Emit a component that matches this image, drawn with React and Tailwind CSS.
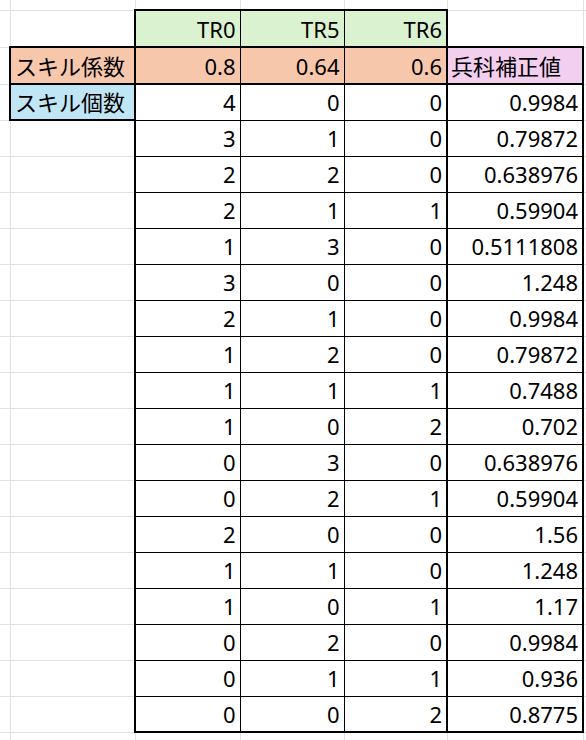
import React from 'react';

const rows = [
  [4, 0, 0, '0.9984'],
  [3, 1, 0, '0.79872'],
  [2, 2, 0, '0.638976'],
  [2, 1, 1, '0.59904'],
  [1, 3, 0, '0.5111808'],
  [3, 0, 0, '1.248'],
  [2, 1, 0, '0.9984'],
  [1, 2, 0, '0.79872'],
  [1, 1, 1, '0.7488'],
  [1, 0, 2, '0.702'],
  [0, 3, 0, '0.638976'],
  [0, 2, 1, '0.59904'],
  [2, 0, 0, '1.56'],
  [1, 1, 0, '1.248'],
  [1, 0, 1, '1.17'],
  [0, 2, 0, '0.9984'],
  [0, 1, 1, '0.936'],
  [0, 0, 2, '0.8775'],
];

const grid = 'border border-[#e1e1e1] p-0';

export default function App() {
  return (
    <div
      className="w-[586px] h-[740px] overflow-hidden bg-white text-black"
      style={{ fontFamily: '"Noto Sans", "Noto Sans CJK JP", sans-serif' }}
    >
      <table className="table-fixed border-collapse w-[623px] text-[22px] leading-none tabular-nums">
        <colgroup>
          <col className="w-[10px]" />
          <col className="w-[125px]" />
          <col className="w-[105px]" />
          <col className="w-[104px]" />
          <col className="w-[103px]" />
          <col className="w-[136px]" />
          <col className="w-[40px]" />
        </colgroup>
        <tbody>
          {/* partial row above */}
          <tr className="h-[10px]">
            <td className="border-r border-b border-[#e1e1e1] p-0" />
            <td className="border-r border-b border-[#e1e1e1] p-0" />
            <td className="border-r border-b border-[#e1e1e1] p-0" />
            <td className="border-r border-b border-[#e1e1e1] p-0" />
            <td className="border-r border-b border-[#e1e1e1] p-0" />
            <td className="border-r border-b border-[#e1e1e1] p-0" />
            <td className="border-r border-b border-[#e1e1e1] p-0" />
          </tr>

          {/* header: TR0 / TR5 / TR6 */}
          <tr className="h-[37px]">
            <td className={`${grid} border-l-0`} />
            <td className={grid} />
            {['TR0', 'TR5', 'TR6'].map((h, i) => (
              <td
                key={h}
                className={`border border-black border-t-2 border-b-2 bg-[#daf2d0] text-right px-[4px] align-middle ${i === 0 ? 'border-l-2' : ''} ${i === 2 ? 'border-r-2' : ''}`}
              >
                {h}
              </td>
            ))}
            <td className={grid} />
            <td className={grid} />
          </tr>

          {/* skill coefficient row */}
          <tr className="h-[37px]">
            <td className={`${grid} border-l-0`} />
            <td className="border-2 border-black bg-[#f7c7ac] text-left px-[4px] align-middle whitespace-nowrap">
              スキル係数
            </td>
            <td className="border border-black border-t-2 border-b-2 border-l-2 bg-[#f7c7ac] text-right px-[4px] align-middle">
              0.8
            </td>
            <td className="border border-black border-t-2 border-b-2 bg-[#f7c7ac] text-right px-[4px] align-middle">
              0.64
            </td>
            <td className="border border-black border-t-2 border-b-2 border-r-2 bg-[#f7c7ac] text-right px-[4px] align-middle">
              0.6
            </td>
            <td className="border-2 border-black bg-[#f2ceef] text-left px-[3px] align-middle whitespace-nowrap">
              兵科補正値
            </td>
            <td className={grid} />
          </tr>

          {rows.map((r, ri) => {
            const last = ri === rows.length - 1;
            return (
              <tr key={ri} className="h-[36px]">
                <td className={`${grid} border-l-0`} />
                {ri === 0 ? (
                  <td className="border-2 border-black bg-[#c0e6f5] text-left px-[4px] align-middle whitespace-nowrap">
                    スキル個数
                  </td>
                ) : (
                  <td className={grid} />
                )}
                <td className={`border border-black border-l-2 text-right px-[4px] align-middle ${last ? 'border-b-2' : ''}`}>
                  {r[0]}
                </td>
                <td className={`border border-black text-right px-[4px] align-middle ${last ? 'border-b-2' : ''}`}>
                  {r[1]}
                </td>
                <td className={`border border-black border-r-2 text-right px-[4px] align-middle ${last ? 'border-b-2' : ''}`}>
                  {r[2]}
                </td>
                <td className={`border border-black border-l-2 border-r-2 text-right px-[4px] align-middle ${last ? 'border-b-2' : ''}`}>
                  {r[3]}
                </td>
                <td className={grid} />
              </tr>
            );
          })}

          {/* partial row below */}
          <tr className="h-[20px]">
            <td className={`${grid} border-l-0`} />
            <td className={grid} />
            <td className={grid} />
            <td className={grid} />
            <td className={grid} />
            <td className={grid} />
            <td className={grid} />
          </tr>
        </tbody>
      </table>
    </div>
  );
}
